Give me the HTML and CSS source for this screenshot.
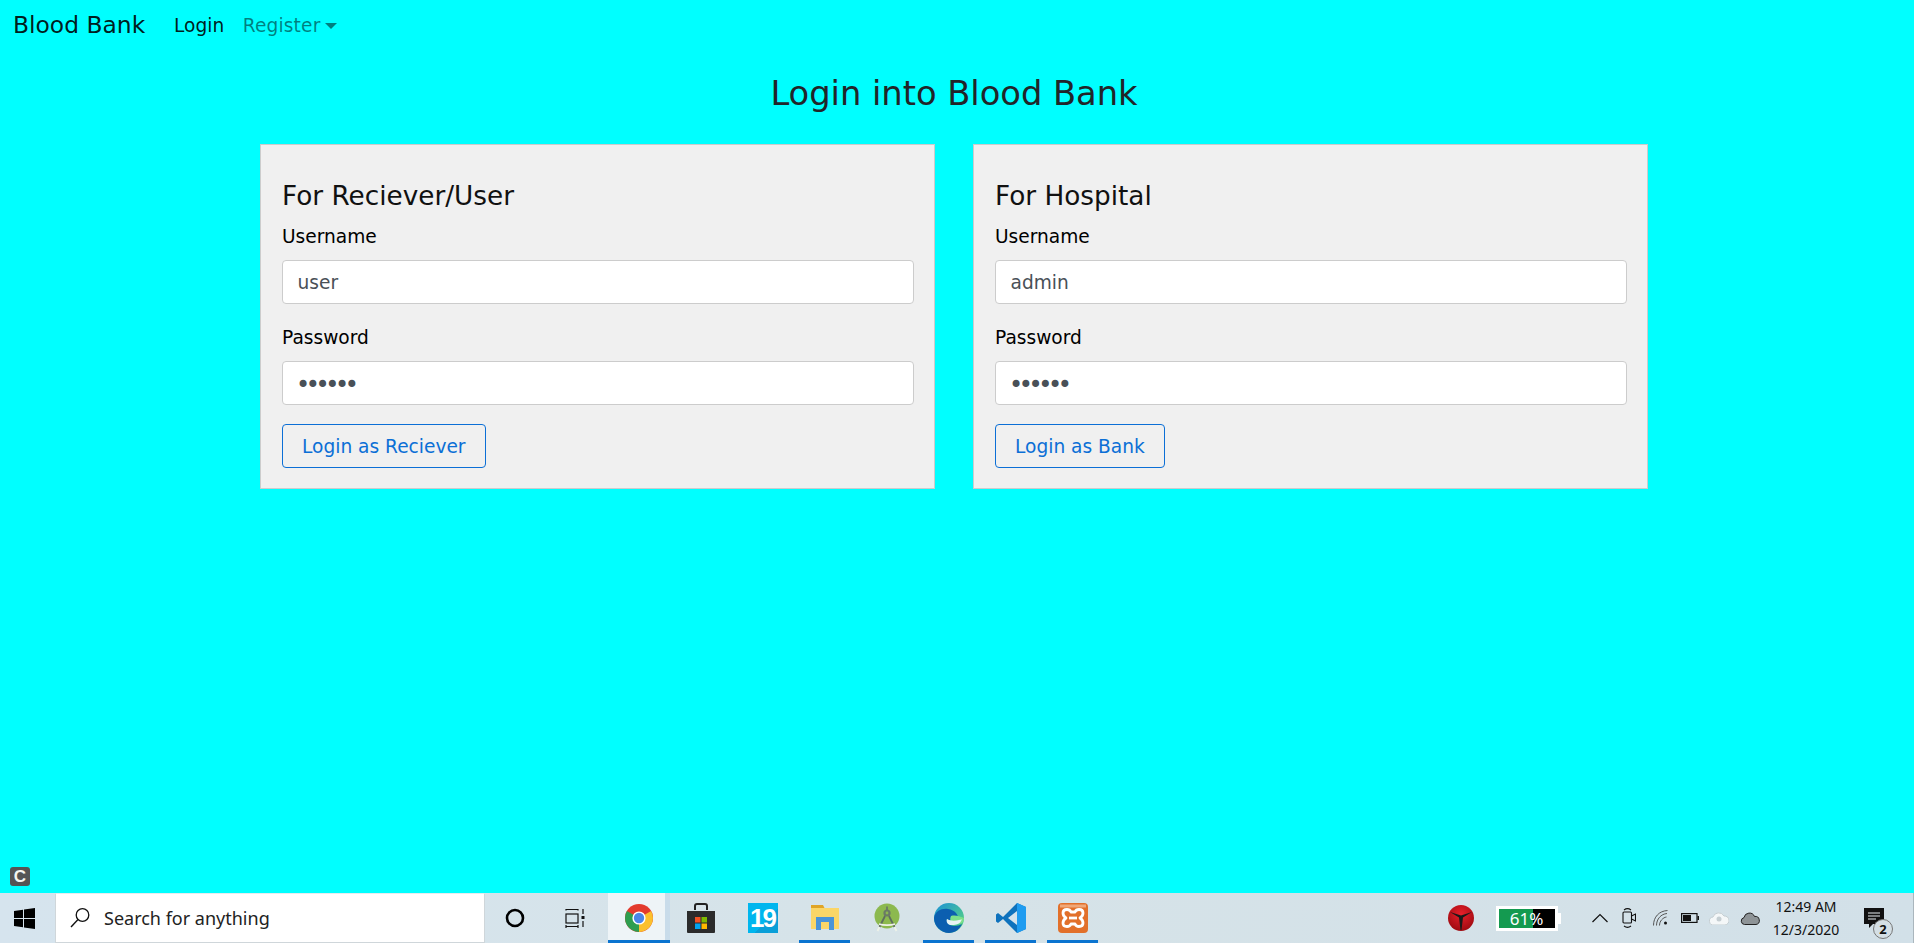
FILE: index.html
```html
<!DOCTYPE html>
<html lang="en">
<head>
  <meta charset="UTF-8" />
  <title>Blood Bank</title>
  <link rel="stylesheet" href="styles.css">
</head>
<body>
  <div class="page">
    <nav class="navbar">
      <a class="brand" href="#">Blood Bank</a>
      <a class="nav-link active" href="#">Login</a>
      <a class="nav-link register" href="#">Register<span class="caret"></span></a>
    </nav>

    <h2 class="title">Login into Blood Bank</h2>

    <div class="cards">
      <form class="card">
        <h4>For Reciever/User</h4>
        <label>Username</label>
        <input type="text" value="user" />
        <label class="second">Password</label>
        <input class="pass" type="password" value="secret" />
        <button type="button">Login as Reciever</button>
      </form>
      <form class="card">
        <h4>For Hospital</h4>
        <label>Username</label>
        <input type="text" value="admin" />
        <label class="second">Password</label>
        <input class="pass" type="password" value="secret" />
        <button type="button">Login as Bank</button>
      </form>
    </div>

    <div class="ext-badge">C</div>
  </div>

  <div class="taskbar">
    <div class="start">
      <svg width="21" height="21" viewBox="0 0 21 21"><path fill="#000" d="M0 3 9 1.7V10H0zM10 1.5 21 0V10H10zM0 11H9V19.3L0 18zM10 11H21V21L10 19.5z"/></svg>
    </div>
    <div class="search">
      <svg width="20" height="22" viewBox="0 0 20 22"><circle cx="12.5" cy="8" r="6.3" fill="none" stroke="#111" stroke-width="1.3"/><path d="M8 12.5 1 20" stroke="#111" stroke-width="1.4" fill="none"/></svg>
      <span>Search for anything</span>
    </div>
    <div class="cortana"><svg width="20" height="20" viewBox="0 0 20 20"><circle cx="10" cy="10" r="8" fill="none" stroke="#000" stroke-width="2.6"/></svg></div>
    <div class="taskview">
      <svg width="20" height="20" viewBox="0 0 20 20" fill="none" stroke="#111" stroke-width="1.2"><path d="M1 1.5H13M1 18.5H13M1 1v1.5M13 1v1.5M1 17v3M13 17v3"/><rect x="1" y="6" width="12" height="9"/><path d="M18 1v5M18 13v6"/><rect x="16.5" y="8" width="3" height="3" fill="#111" stroke="none"/></svg>
    </div>

    <div class="tile chrome-tile">
      <svg width="28" height="28" viewBox="0 0 28 28">
        <circle cx="14" cy="14" r="14" fill="#e33b2e"/>
        <path d="M14 14 26.1 7A14 14 0 0 1 14 28z" fill="#fbc02d"/>
        <path d="M14 14 14 28A14 14 0 0 1 1.9 7z" fill="#2e9e4f"/>
        <circle cx="14" cy="14" r="6.6" fill="#fff"/>
        <circle cx="14" cy="14" r="5.2" fill="#4a86e8"/>
      </svg>
    </div>
    <div class="tile">
      <svg width="30" height="30" viewBox="0 0 30 30">
        <path d="M9 7V3a2 2 0 0 1 2-2h8a2 2 0 0 1 2 2v4" fill="none" stroke="#222" stroke-width="2"/>
        <path d="M1 8H29V29a1 1 0 0 1-1 1H2a1 1 0 0 1-1-1z" fill="#2b2b2b"/>
        <rect x="9" y="14" width="5.5" height="5.5" fill="#f25022"/>
        <rect x="15.5" y="14" width="5.5" height="5.5" fill="#7fba00"/>
        <rect x="9" y="20.5" width="5.5" height="5.5" fill="#00a4ef"/>
        <rect x="15.5" y="20.5" width="5.5" height="5.5" fill="#ffb900"/>
      </svg>
    </div>
    <div class="tile"><div class="calendar">19</div></div>
    <div class="tile running">
      <svg width="28" height="26" viewBox="0 0 28 26">
        <path d="M0 0H12L14 4H0z" fill="#e0a526"/>
        <path d="M0 3H28V24H0z" fill="#fbd667"/>
        <path d="M5 25V12H23V25H18V17H10V25z" fill="#4a94d8"/>
      </svg>
    </div>
    <div class="tile">
      <svg width="28" height="30" viewBox="0 0 28 30">
        <circle cx="14" cy="13" r="12.5" fill="#8cb94f"/>
        <circle cx="14" cy="10" r="3.6" fill="#6b7a66"/>
        <circle cx="14" cy="10" r="1.4" fill="#8cb94f"/>
        <path d="M14 3.500V7" stroke="#6b7a66" stroke-width="1.8"/>
        <path d="M12 13 6.500 24M16 13 21.500 24" stroke="#5f6e5e" stroke-width="1.8" fill="none"/>
        <path d="M6.500 24 4.500 28M21.500 24 23.500 28M6 21C10 22.500 18 22.500 22 21" stroke="#eef2e8" stroke-width="1.800" fill="none"/>
      </svg>
    </div>
    <div class="tile running">
      <svg width="30" height="30" viewBox="0 0 30 30">
        <defs>
          <linearGradient id="edgeTop" x1="0" y1="0" x2="1" y2="1"><stop offset="0" stop-color="#1a90d8"/><stop offset="1" stop-color="#5fdc78"/></linearGradient>
        </defs>
        <circle cx="15" cy="15" r="15" fill="url(#edgeTop)"/>
        <path d="M0 15C1 8 8 5 14 6c7 1 11 6 10 11-3 1-9 1-11-1-1 3 2 7 7 7 3 0 6-1 8-2-2 5-7 9-13 9C7 30 0 23 0 15z" fill="#0c5fb0"/>
        <path d="M17 13c4-1 8 0 13 2 0 2-1 4-2 5-4 2-9 1-11-1-1-2-1-4 0-6z" fill="#7ee08a"/>
        <path d="M13 16c3 2 8 2 12 1 2 0 3-1 3-1-2 7-9 6-12 6-3-1-4-4-3-6z" fill="#e8f4f4"/>
      </svg>
    </div>
    <div class="tile running">
      <svg width="30" height="30" viewBox="0 0 30 30">
        <path d="M21 0 30 4V26L21 30 7 16 2 20 0 18.500V11.500L2 10 7 14z" fill="#0e72bd"/>
        <path d="M21 0 30 4V26L21 30z" fill="#1f9cf0"/>
        <path d="M21 8 12 15l9 7z" fill="#d5e3ec"/>
      </svg>
    </div>
    <div class="tile running">
      <svg width="30" height="30" viewBox="0 0 30 30">
        <rect width="30" height="30" rx="4" fill="#e2702a"/>
        <rect x="2" y="1.500" width="26" height="3" fill="#f0a878"/>
        <path d="M9 6.500Q12 6.500 13 9H17Q18 6.500 21 6.500 25 6.500 25 10 25 13 22 15 25 17 25 20 25 23.500 21 23.500 18 23.500 17 21H13Q12 23.500 9 23.500 5 23.500 5 20 5 17 8 15 5 13 5 10 5 6.500 9 6.500z" fill="none" stroke="#fff" stroke-width="2.800" stroke-linejoin="round"/>
        <path d="M11 15H19" stroke="#fff" stroke-width="2.800"/>
      </svg>
    </div>

    <div class="tray">
      <svg class="tray-red" width="26" height="26" viewBox="0 0 26 26">
        <defs>
          <radialGradient id="redBall" cx="0.5" cy="0.35" r="0.7"><stop offset="0" stop-color="#e8202a"/><stop offset="1" stop-color="#98090f"/></radialGradient>
        </defs>
        <circle cx="13" cy="13" r="13" fill="url(#redBall)"/>
        <path d="M2 7 11 12.500 12.500 25H13.500L15 12.500 24 7 13 10.500z" fill="#1a1a1a"/>
      </svg>
      <div class="battery-meter"><div class="battery-fill">61%</div><div class="battery-nub"></div></div>
      <svg class="tray-icon" width="16" height="10" viewBox="0 0 16 10"><path d="M0.500 9 8 1.500 15.500 9" fill="none" stroke="#111" stroke-width="1.200"/></svg>
      <svg class="tray-icon tray-meet" width="14" height="20" viewBox="0 0 14 20" fill="none" stroke="#111" stroke-width="1.100"><rect x="1" y="4" width="8.500" height="11" rx="1"/><path d="M9.500 8 13.500 6V13L9.500 11M2 2C4 .5 7 .5 9 2M2 18C4 19.500 7 19.500 9 18"/></svg>
      <svg class="tray-icon" width="15" height="16" viewBox="0 0 15 16" fill="none" stroke="#555" stroke-width="1"><path d="M.5 15.500C.5 7 6 1 14.500.5M3.500 15.500C3.500 9 8 4 14 3.500M6.500 15.500C6.500 11 10 7.500 13.500 7"/><circle cx="12.500" cy="13" r="1.500" fill="#111" stroke="none"/></svg>
      <svg class="tray-icon tray-batt" width="18" height="10" viewBox="0 0 18 10"><rect x=".6" y=".6" width="15.400" height="8.800" fill="none" stroke="#111" stroke-width="1.200"/><rect x="2" y="2" width="8" height="6" fill="#111"/><rect x="16.500" y="3" width="1.500" height="4" fill="#111"/></svg>
      <svg class="tray-icon tray-cloud" width="20" height="14" viewBox="0 0 20 14"><path d="M5 14A4 4 0 0 1 4 6 6 6 0 0 1 15 5 4.500 4.500 0 0 1 16 14z" fill="#f4f7f8" stroke="#c5ced2"/><circle cx="10" cy="8" r="2.500" fill="#c5ced2"/></svg>
      <svg class="tray-icon" width="20" height="13" viewBox="0 0 20 13"><path d="M4.500 12.500A3.500 3.500 0 0 1 4 5.600 5.500 5.500 0 0 1 14.500 4.500 4 4 0 0 1 16 12.500z" fill="#8e9497" stroke="#222"/></svg>
      <div class="clock"><span>12:49 AM</span><span>12/3/2020</span></div>
      <div class="notify">
        <svg width="20" height="20" viewBox="0 0 20 20"><path d="M0 0H20V16H9L5 20V16H0z" fill="#111"/><path d="M4 5H16M4 8H16M4 11H12" stroke="#e8edf0" stroke-width="1"/></svg>
        <span class="notify-count">2</span>
      </div>
      <div class="show-desktop"></div>
    </div>
  </div>
</body>
</html>
```

FILE: styles.css
```css
html, body {
  margin: 0;
  height: 100%;
}
body {
  display: flex;
  flex-direction: column;
  height: 943px;
  overflow: hidden;
  background-color: #00ffff;
  font-family: "DejaVu Sans", sans-serif;
}
.page {
  flex: 1;
  display: flex;
  flex-direction: column;
}
.navbar {
  display: flex;
  align-items: center;
  height: 50px;
  padding-left: 13px;
}
.brand {
  width: 161px;
  font-size: 23.4px;
  color: rgba(0, 0, 0, 0.9);
  text-decoration: none;
}
.nav-link {
  margin-right: 18.5px;
  font-size: 18.6px;
  color: rgba(0, 0, 0, 0.5);
  text-decoration: none;
}
.nav-link.active {
  color: rgba(0, 0, 0, 0.9);
}
.nav-link.register {
  letter-spacing: 0.15px;
}
.caret {
  display: inline-block;
  margin-left: 5px;
  vertical-align: 3px;
  border-top: 6px solid;
  border-left: 6px solid transparent;
  border-right: 6px solid transparent;
}
.title {
  margin: 20px 6px 0 0;
  height: 74px;
  font-size: 33.7px;
  font-weight: 400;
  line-height: 48px;
  text-align: center;
  color: #212529;
}
.cards {
  display: flex;
  justify-content: center;
  gap: 38px;
  padding-right: 6px;
}
.card {
  box-sizing: border-box;
  width: 675px;
  height: 345px;
  padding: 21px 20px 21px 21px;
  background: #f0f0f0;
  border: 1px solid #ccc;
}
.card h4 {
  margin: 0;
  height: 56px;
  font-size: 26.3px;
  font-weight: 400;
  line-height: 60px;
  color: #111;
}
.card label {
  display: block;
  height: 38px;
  font-size: 18.6px;
  line-height: 30px;
  color: #000;
}
.card label.second {
  margin-top: 19px;
}
.card input {
  box-sizing: border-box;
  display: block;
  width: 100%;
  height: 44px;
  padding: 0 14.5px;
  font-family: inherit;
  font-size: 18.6px;
  color: #495057;
  background: #fff;
  border: 1px solid #ccc;
  border-radius: 4px;
}
.card input.pass {
  padding: 4px 14.5px 0 13px;
  font-size: 24px;
  letter-spacing: -4.4px;
}
.card button {
  display: block;
  box-sizing: border-box;
  height: 44px;
  margin-top: 19px;
  padding: 0 19px;
  font-family: inherit;
  font-size: 18.6px;
  color: #0b6fd6;
  background: transparent;
  border: 1px solid #0b6fd6;
  border-radius: 4px;
}
.ext-badge {
  width: 20px;
  height: 19px;
  margin: auto 0 7px 10px;
  background: #555;
  border-radius: 3px;
  font-family: "Liberation Sans", sans-serif;
  font-size: 17px;
  font-weight: 700;
  line-height: 19px;
  text-align: center;
  color: #f5f5f0;
}
.taskbar {
  flex: none;
  display: flex;
  align-items: center;
  height: 50px;
  font-family: "Noto Sans", sans-serif;
  background: linear-gradient(90deg, #d6e4ee, #d6e3e8 50%, #d2e0e8);
}
.start {
  display: flex;
  justify-content: center;
  width: 48px;
  padding-left: 0;
}
.search {
  box-sizing: border-box;
  display: flex;
  align-items: center;
  gap: 14px;
  width: 430px;
  height: 50px;
  margin-left: 7px;
  padding-left: 14px;
  background: #fff;
  border: 1px solid #cfd6da;
  border-top-color: #e6ecef;
  font-size: 18px;
  color: #222;
}
.cortana {
  display: flex;
  margin-left: 20px;
}
.taskview {
  display: flex;
  margin-left: 40px;
  margin-right: 22.5px;
}
.tile {
  box-sizing: border-box;
  display: flex;
  align-items: center;
  justify-content: center;
  width: 51px;
  height: 50px;
  margin: 0 5.5px;
  padding-top: 3px;
  border-bottom: 3px solid transparent;
}
.tile.running {
  border-bottom-color: #0b74d0;
}
.chrome-tile {
  width: 62px;
  margin: 0;
  background: linear-gradient(90deg, #eef4f7, #eef4f7 92%, #c9dcea 92%);
  border-bottom-color: #0b74d0;
}
.calendar {
  width: 30px;
  height: 30px;
  background: linear-gradient(135deg, #00b6ee 60%, #0a9fd8 60%);
  font-family: "Liberation Sans", sans-serif;
  font-size: 26px;
  font-weight: 700;
  letter-spacing: -2px;
  line-height: 30px;
  text-align: center;
  color: #fff;
}
.tray {
  display: flex;
  align-items: center;
  flex: 1;
  height: 50px;
  padding-left: 344px;
}
.tray-red {
  flex: none;
  margin-right: 22px;
}
.battery-meter {
  display: flex;
  align-items: center;
  margin-right: 31.5px;
}
.battery-fill {
  box-sizing: border-box;
  width: 62px;
  height: 25px;
  border: 3px solid #fff;
  background: linear-gradient(90deg, #149a50 61%, #000 61%);
  font-size: 17px;
  line-height: 19px;
  text-align: center;
  color: #fff;
}
.battery-nub {
  width: 3px;
  height: 11px;
  background: #fff;
}
.tray-icon {
  flex: none;
  margin-right: 13.5px;
}
.tray-meet {
  margin-right: 17px;
}
.tray-batt {
  margin-right: 10px;
}
.tray-cloud {
  margin-right: 11px;
}
.clock {
  flex: none;
  display: flex;
  flex-direction: column;
  align-items: center;
  gap: 4px;
  width: 94px;
  margin-left: -14.5px;
  font-size: 14px;
  line-height: 19px;
  color: #111;
}
.notify {
  position: relative;
  display: flex;
  flex: none;
  margin-left: 11px;
}
.notify-count {
  position: absolute;
  left: 9px;
  top: 11px;
  box-sizing: border-box;
  width: 20px;
  height: 20px;
  background: #d4dfe5;
  border: 1px solid #777;
  border-radius: 50%;
  font-size: 13px;
  font-weight: 700;
  line-height: 18px;
  text-align: center;
  color: #111;
}
.show-desktop {
  width: 1px;
  height: 50px;
  margin-left: auto;
  background: #aab6bd;
}
```
